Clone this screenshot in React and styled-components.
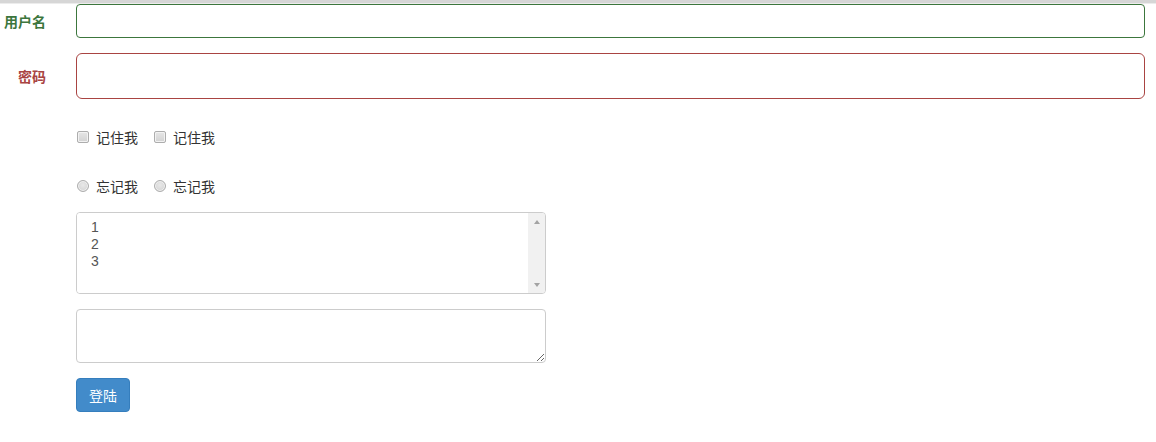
import React from 'react';
import styled, { createGlobalStyle } from 'styled-components';

const GlobalStyle = createGlobalStyle`
  body {
    margin: 0;
    background: #fff;
    font-family: "Liberation Sans", "Noto Sans CJK SC", sans-serif;
    font-size: 14px;
    color: #333;
  }
`;

const TopBar = styled.div`
  height: 3px;
  background: #d6d6d6;
  border-bottom: 1px solid #ececec;
`;

const Form = styled.form`
  padding: 0 11px 0 0;
`;

const Group = styled.div`
  display: flex;
  align-items: center;
  gap: 30px;
  margin-top: ${(p) => p.top || 0}px;
`;

const Label = styled.label`
  width: 46px;
  flex: none;
  text-align: right;
  font-family: "Noto Sans CJK SC", sans-serif;
  font-weight: bold;
  font-size: 14px;
  color: ${(p) => (p.state === 'error' ? '#a94442' : '#3c763d')};
`;

const TextInput = styled.input`
  flex: 1;
  box-sizing: border-box;
  height: ${(p) => (p.large ? 46 : 34)}px;
  padding: 6px 12px;
  border: 1px solid ${(p) => (p.state === 'error' ? '#a94442' : '#3c763d')};
  border-radius: ${(p) => (p.large ? 6 : 4)}px;
  font-size: 14px;
  outline: none;
`;

const Controls = styled.div`
  margin-left: 76px;
  display: flex;
  flex-direction: column;
  align-items: flex-start;
`;

const InlineRow = styled.div`
  display: flex;
  align-items: center;
  gap: 15px;
  height: 20px;
  margin-top: ${(p) => p.top}px;
`;

const Choice = styled.label`
  display: flex;
  align-items: center;
  gap: 7px;
  font-family: "Noto Sans CJK SC", sans-serif;
  font-size: 14px;
  color: #333;
`;

const Box = styled.input`
  appearance: none;
  margin: 0 0 0 1px;
  width: 12px;
  height: 12px;
  box-sizing: border-box;
  border: 1px solid #adadad;
  border-radius: ${(p) => (p.type === 'radio' ? '50%' : '2px')};
  background: ${(p) =>
    p.type === 'radio'
      ? 'radial-gradient(circle at 50% 40%, #e8e8e8, #cfcfcf)'
      : 'linear-gradient(#e6e6e6, #d2d2d2)'};
  box-shadow: inset 0 0 0 1px #f2f2f2;
`;

const ListFrame = styled.div`
  display: flex;
  box-sizing: border-box;
  width: 470px;
  height: 82px;
  margin-top: 16px;
  border: 1px solid #ccc;
  border-radius: 4px;
  overflow: hidden;
`;

const ListBox = styled.select`
  flex: 1;
  border: none;
  padding: 6px 12px;
  font-family: "Liberation Sans", sans-serif;
  font-size: 14px;
  color: #555;
  outline: none;
  overflow: hidden;
  option {
    padding: 0 2px;
    line-height: 16.5px;
  }
`;

const ScrollTrack = styled.div`
  width: 17px;
  flex: none;
  background: #f1f1f1;
  display: flex;
  flex-direction: column;
  justify-content: space-between;
  align-items: center;
  padding: 7px 0 6px;
`;

const Arrow = styled.span`
  width: 0;
  height: 0;
  border-left: 3.5px solid transparent;
  border-right: 3.5px solid transparent;
  ${(p) =>
    p.down
      ? 'border-top: 4px solid #a3a3a3;'
      : 'border-bottom: 4px solid #a3a3a3;'}
`;

const Notes = styled.textarea`
  box-sizing: border-box;
  width: 470px;
  height: 54px;
  margin-top: 15px;
  padding: 6px 12px;
  border: 1px solid #ccc;
  border-radius: 4px;
  font-size: 14px;
  outline: none;
`;

const Submit = styled.button`
  margin-top: 15px;
  height: 34px;
  padding: 6px 12px;
  background: #428bca;
  border: 1px solid #357ebd;
  border-radius: 4px;
  color: #fff;
  font-family: "Noto Sans CJK SC", sans-serif;
  font-size: 14px;
  line-height: 20px;
`;

export default function App() {
  return (
    <>
      <GlobalStyle />
      <TopBar />
      <Form onSubmit={(e) => e.preventDefault()}>
        <Group>
          <Label htmlFor="username">用户名</Label>
          <TextInput id="username" type="text" />
        </Group>
        <Group top={15}>
          <Label htmlFor="password" state="error">
            密码
          </Label>
          <TextInput id="password" type="password" large state="error" />
        </Group>
        <Controls>
          <InlineRow top={28}>
            <Choice>
              <Box type="checkbox" />
              记住我
            </Choice>
            <Choice>
              <Box type="checkbox" />
              记住我
            </Choice>
          </InlineRow>
          <InlineRow top={29}>
            <Choice>
              <Box type="radio" name="forget" />
              忘记我
            </Choice>
            <Choice>
              <Box type="radio" name="forget" />
              忘记我
            </Choice>
          </InlineRow>
          <ListFrame>
            <ListBox multiple>
              <option>1</option>
              <option>2</option>
              <option>3</option>
            </ListBox>
            <ScrollTrack>
              <Arrow />
              <Arrow down />
            </ScrollTrack>
          </ListFrame>
          <Notes />
          <Submit type="submit">登陆</Submit>
        </Controls>
      </Form>
    </>
  );
}
